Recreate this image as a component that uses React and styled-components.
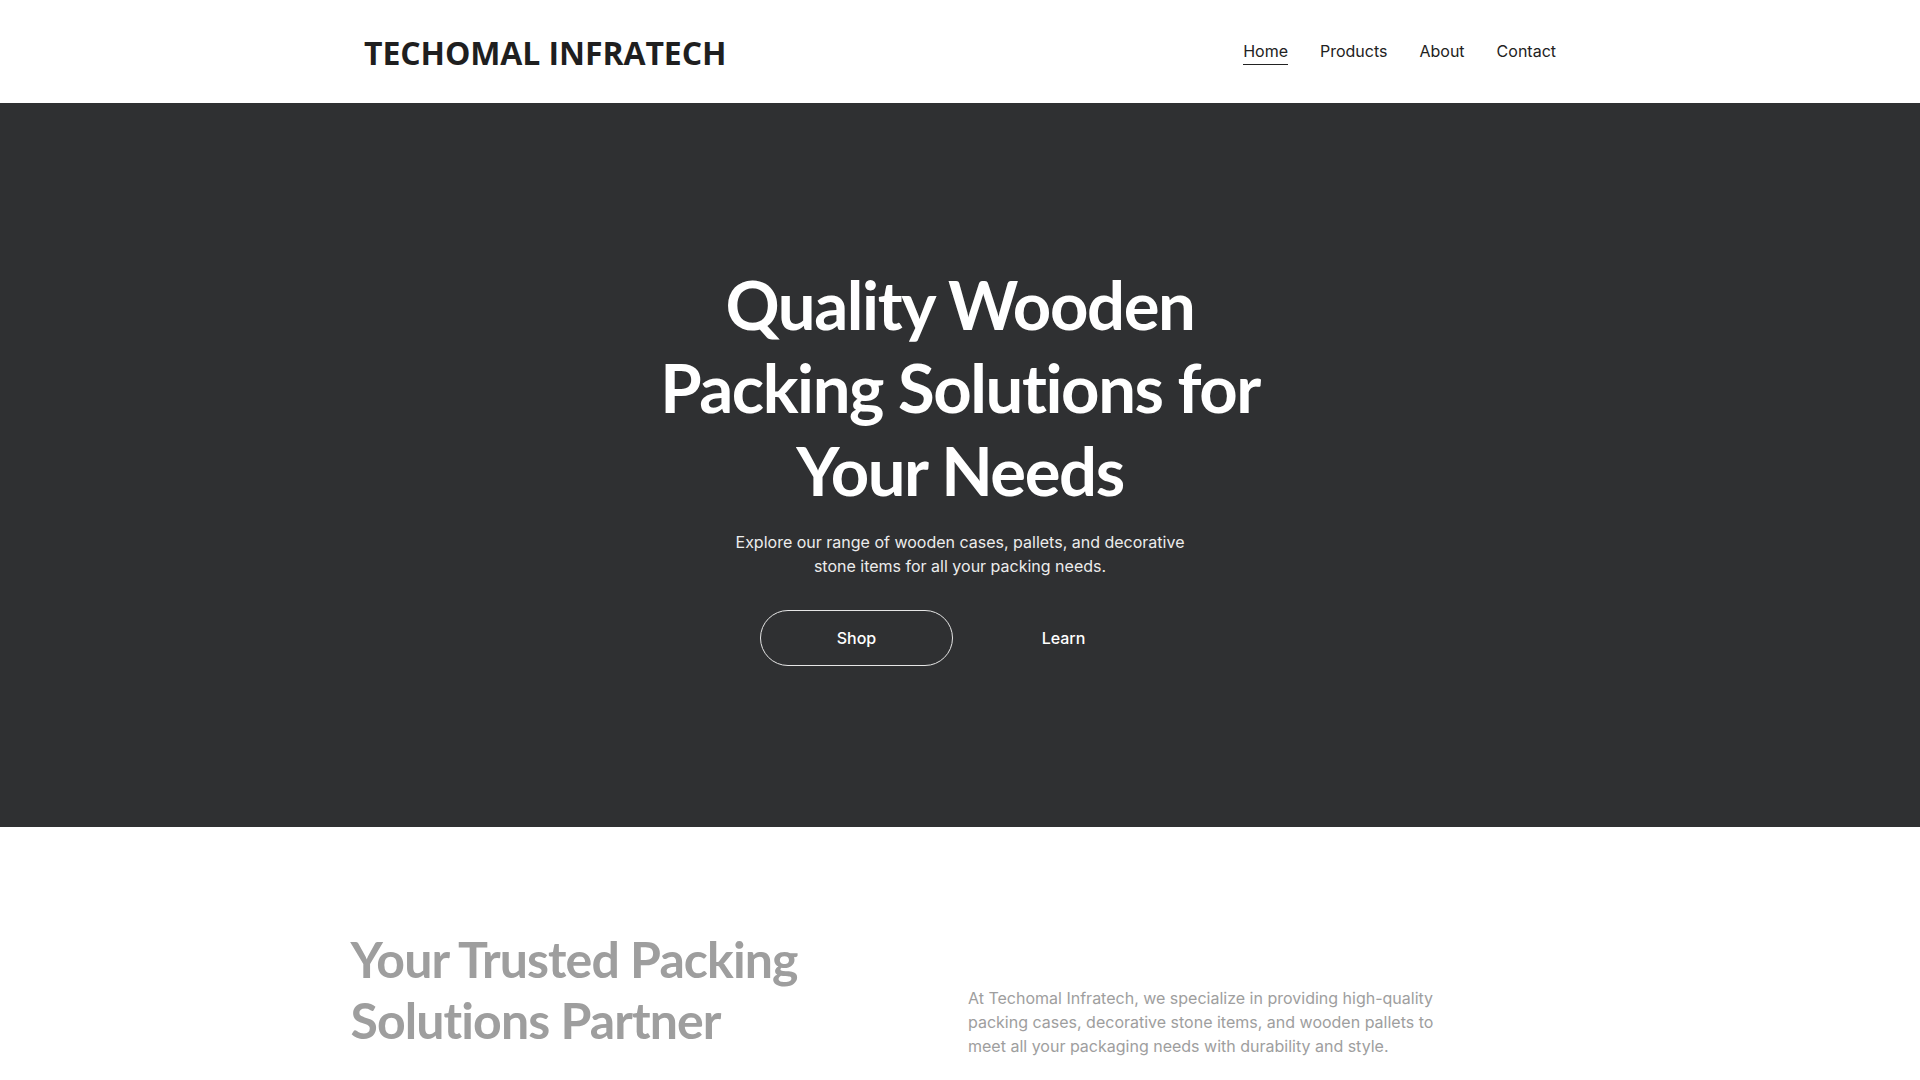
import React from 'react'
import styled, { createGlobalStyle } from 'styled-components'

const GlobalStyle = createGlobalStyle`
    html {
        overflow-y: scroll;
    }
    ::-webkit-scrollbar {
        width: 15px;
        background: #fff;
    }
    ::-webkit-scrollbar-thumb {
        background: #1b1b1b;
        border-radius: 8px;
        border: 4px solid #fff;
    }
    body {
        margin: 0;
        font-family: Inter, "Noto Sans", sans-serif;
        color: #212121;
        background: #fff;
    }
    * {
        box-sizing: border-box;
    }
`

const Header = styled.header`
    height: 103px;
    background: #fff;
`
const HeaderInner = styled.div`
    max-width: 1192px;
    height: 100%;
    margin: 0 auto;
    display: flex;
    align-items: center;
    justify-content: space-between;
`
const Logo = styled.div`
    font-family: "Open Sans", sans-serif;
    font-weight: 700;
    font-size: 32px;
    color: #1f1f1f;
    letter-spacing: -0.1px;
    margin-top: 2px;
`
const Nav = styled.nav`
    display: flex;
    gap: 32px;
    margin-top: 2px;
`
const NavLink = styled.a`
    font-size: 16px;
    color: #222;
    text-decoration: none;
    padding-bottom: 3px;
    border-bottom: 1px solid ${p => (p.$active ? '#222' : 'transparent')};
`

const Hero = styled.section`
    background: #2f3032;
    padding: 160px 24px 161px;
    display: flex;
    flex-direction: column;
    align-items: center;
    text-align: center;
`
const Title = styled.h1`
    margin: 0;
    max-width: 640px;
    font-family: Lato, sans-serif;
    font-weight: 700;
    font-size: 67px;
    line-height: 83px;
    letter-spacing: -1.4px;
    color: #fff;
`
const Lead = styled.p`
    margin: 18px 0 0;
    max-width: 470px;
    font-size: 16px;
    line-height: 24px;
    color: #ececec;
`
const Actions = styled.div`
    margin-top: 32px;
    display: flex;
    gap: 14px;
`
const Button = styled.button`
    width: 193px;
    height: 56px;
    border-radius: 28px;
    border: 1px solid ${p => (p.$outline ? '#e6e6e6' : 'transparent')};
    background: transparent;
    color: #fff;
    font-family: Inter, sans-serif;
    font-weight: 500;
    font-size: 16px;
    cursor: pointer;
`

const About = styled.section`
    padding: 102px 0 160px;
`
const AboutGrid = styled.div`
    max-width: 1219px;
    margin: 0 auto;
    display: grid;
    grid-template-columns: 1fr 1fr;
    gap: 16px;
    align-items: end;
`
const AboutTitle = styled.h2`
    margin: 0;
    max-width: 480px;
    font-family: Lato, sans-serif;
    font-weight: 700;
    font-size: 50px;
    line-height: 61px;
    letter-spacing: -0.9px;
    color: #9e9e9e;
`
const AboutText = styled.p`
    margin: 0 0 -7px;
    max-width: 480px;
    font-size: 16px;
    line-height: 24px;
    color: #9e9e9e;
`

const links = ['Home', 'Products', 'About', 'Contact']

export default function App() {
    return (
        <>
            <GlobalStyle />
            <Header>
                <HeaderInner>
                    <Logo>TECHOMAL INFRATECH</Logo>
                    <Nav>
                        {links.map(l => (
                            <NavLink key={l} href="#" $active={l === 'Home'}>{l}</NavLink>
                        ))}
                    </Nav>
                </HeaderInner>
            </Header>
            <Hero>
                <Title>Quality Wooden Packing Solutions for Your Needs</Title>
                <Lead>
                    Explore our range of wooden cases, pallets, and decorative stone items for all your packing needs.
                </Lead>
                <Actions>
                    <Button $outline>Shop</Button>
                    <Button>Learn</Button>
                </Actions>
            </Hero>
            <About>
                <AboutGrid>
                    <AboutTitle>Your Trusted Packing Solutions Partner</AboutTitle>
                    <AboutText>
                        At Techomal Infratech, we specialize in providing high-quality packing cases, decorative stone items, and wooden pallets to meet all your packaging needs with durability and style.
                    </AboutText>
                </AboutGrid>
            </About>
        </>
    )
}
